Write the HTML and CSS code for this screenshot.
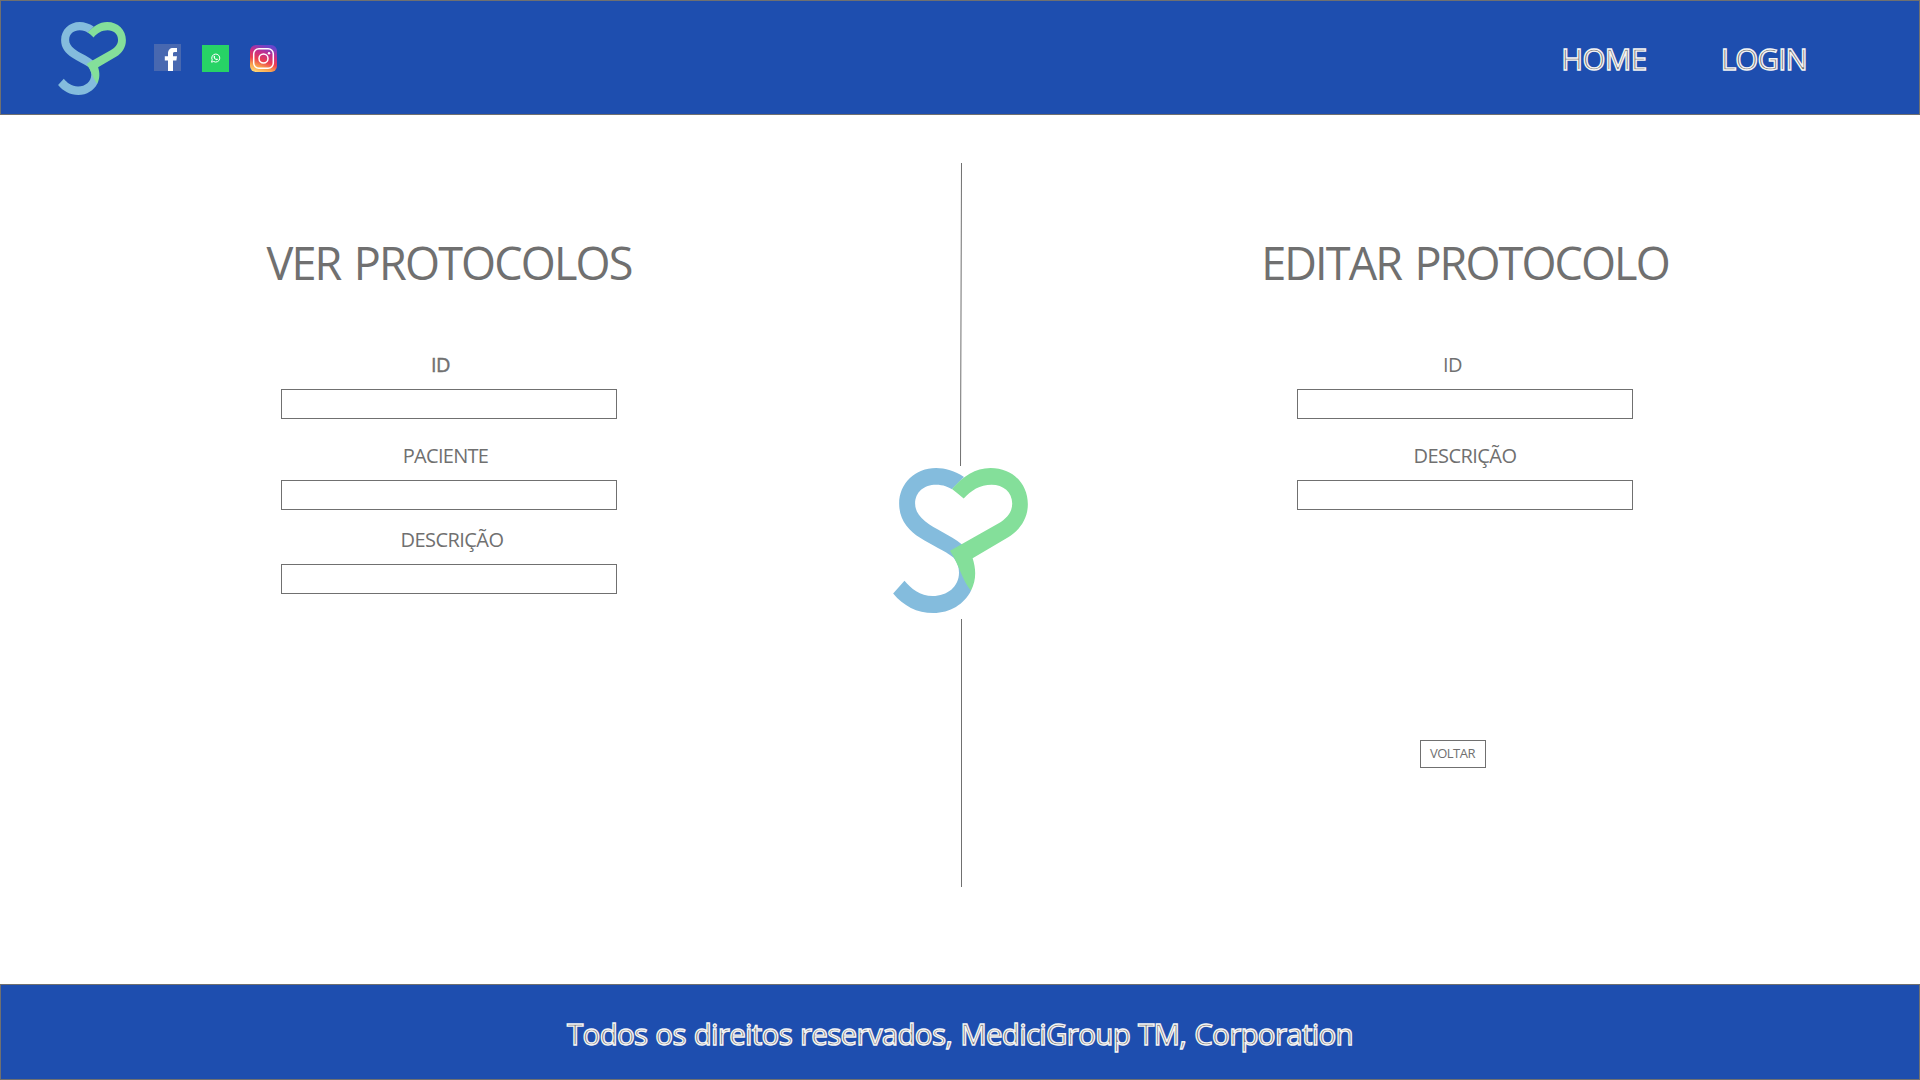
FILE: index.html
```html
<!DOCTYPE html>
<html lang="pt-BR">
<head>
<meta charset="utf-8">
<title>Protocolos</title>
<link rel="stylesheet" href="styles.css">
</head>
<body>
<svg width="0" height="0" class="defs" aria-hidden="true">
  <defs>
    <symbol id="logo" viewBox="69 83 405 436">
      <path fill="#84bcdd" d="M282 110C255 92 225 83 198 83C135 83 87 130 87 190C87 240 115 270 150 293C185 316 225 332 250 352C262 366 267 380 267 398C267 440 232 468 188 468C150 468 122 445 103 422L69 460C100 497 140 519 190 519C240 519 283 492 303 452L300 340L275 312C240 283 195 268 165 243C145 226 135 210 135 190C135 155 162 133 198 133C220 133 236 140 246 147Z"/>
      <path fill="#84df9a" d="M246 146C280 108 315 83 362 83C428 83 474 130 474 192C474 235 450 270 415 291L308 354C318 385 320 420 303 452C276 420 270 380 240 332L385 250C412 234 427 215 427 190C427 155 400 133 365 133C330 133 303 150 281 175C270 165 258 155 246 146Z"/>
    </symbol>
    <linearGradient id="ig" x1="0.2" y1="1" x2="0.55" y2="0">
      <stop offset="0" stop-color="#ffd776"/>
      <stop offset="0.22" stop-color="#f9a04c"/>
      <stop offset="0.45" stop-color="#ea3f50"/>
      <stop offset="0.72" stop-color="#c42d8c"/>
      <stop offset="1" stop-color="#6a45cb"/>
    </linearGradient>
  </defs>
</svg>

<header class="bar header">
  <svg class="logo-small"><use href="#logo"/></svg>
  <div class="social">
    <svg class="facebook" viewBox="0 0 27 27"><rect width="27" height="27" fill="#4868b0"/><path fill="#fff" d="M14 27V16.500H10.800V12.300H14V9.500C14 6 16 4 19 4H23V8H20.600C19.300 8 19 8.700 19 9.800V12.300H23L22.400 16.500H19V27Z"/></svg>
    <svg viewBox="0 0 27 27"><rect width="27" height="27" fill="#27d366"/><path fill="none" stroke="#fff" stroke-width="1" d="M9.500 17.200L10.200 14.900A4 4 0 1 1 11.700 16.500Z"/><path fill="#fff" d="M11.800 11L12.700 10.800L13.200 12L12.800 12.700Q13.300 13.700 14.300 14.100L14.900 13.500L16 14.100Q16 15.200 14.800 15.300Q12.200 14.900 11.600 12.200Z"/></svg>
    <svg viewBox="0 0 27 27"><rect width="27" height="27" rx="6" fill="url(#ig)"/><g fill="none" stroke="#fff" stroke-width="1.500"><rect x="3.700" y="3.700" width="19.600" height="19.600" rx="5.200"/><circle cx="13.500" cy="13.500" r="4.500"/></g><circle cx="19" cy="8.200" r="1.200" fill="#fff"/></svg>
  </div>
  <nav class="nav">
    <a class="outlined home">HOME</a>
    <a class="outlined login">LOGIN</a>
  </nav>
</header>

<main class="main">
  <section class="panel view">
    <h1 class="title">VER PROTOCOLOS</h1>
    <label class="field"><span class="label label-id strong">ID</span><input class="input"></label>
    <label class="field"><span class="label label-patient">PACIENTE</span><input class="input"></label>
    <label class="field tight"><span class="label label-description">DESCRIÇÃO</span><input class="input"></label>
  </section>
  <div class="divider">
    <svg class="line upper" viewBox="0 0 135 303"><path d="M68.500 0L67.500 303"/></svg>
    <svg class="logo-large"><use href="#logo"/></svg>
    <svg class="line lower" viewBox="0 0 135 268"><path d="M68.500 0V268"/></svg>
  </div>
  <section class="panel edit">
    <h1 class="title title-edit">EDITAR PROTOCOLO</h1>
    <label class="field"><span class="label label-edit-id">ID</span><input class="input"></label>
    <label class="field"><span class="label">DESCRIÇÃO</span><input class="input"></label>
    <button class="back">VOLTAR</button>
  </section>
</main>

<footer class="bar footer">
  <p class="outlined rights">Todos os direitos reservados, MediciGroup TM, Corporation</p>
</footer>
</body>
</html>
```
FILE: styles.css
```css
* { box-sizing: border-box; }
body {
  margin: 0;
  height: 1080px;
  display: flex;
  flex-direction: column;
  overflow: hidden;
  background: #fff;
  color: #707070;
  font-family: "Open Sans", "Noto Sans", sans-serif;
}
.defs { display: block; flex: none; height: 0; }
.bar { display: flex; background: #1e4eaf; border: 1px solid #707070; flex: none; }

.header { height: 115px; padding: 21px 112px 0 57px; }
.logo-small { width: 68px; height: 73px; }
.social { display: flex; gap: 21px; margin: 23px 0 0 28px; }
.social svg { width: 27px; height: 27px; }
.social .facebook { margin-top: -1px; }
.nav { display: flex; gap: 74px; margin: 17px 0 0 auto; }
.outlined {
  font-size: 29.500px;
  line-height: 40px;
  white-space: nowrap;
  color: #707070;
  -webkit-text-stroke: 1.400px #f4f4f4;
}
.home { letter-spacing: -0.500px; }
.login { letter-spacing: -0.800px; }

.main { flex: 1; display: grid; grid-template-columns: 893px 135px 1fr; }
.panel { display: flex; flex-direction: column; align-items: center; padding-top: 118px; }
.view { padding-left: 5px; }
.edit { padding-right: 18px; }
.title {
  margin: 0 0 58px;
  font-size: 45px;
  font-weight: 400;
  line-height: 60px;
  letter-spacing: -1.850px;
  word-spacing: 3.500px;
  white-space: nowrap;
}
.title-edit { letter-spacing: -1.900px; }
.field { display: flex; flex-direction: column; align-items: center; gap: 10px; }
.field + .field { margin-top: 23px; }
.field + .tight { margin-top: 16px; }
.label { font-size: 20px; line-height: 28px; letter-spacing: -0.550px; }
.strong { -webkit-text-stroke: 0.400px #707070; }
.label-id { margin-right: 17px; }
.label-patient { margin-right: 7px; letter-spacing: -0.700px; }
.label-description { margin-left: 6px; }
.label-edit-id { margin-right: 25px; }
.input {
  width: 336px;
  height: 30px;
  padding: 0 8px;
  border: 1px solid #707070;
  border-radius: 0;
  background: #fff;
  outline: none;
}
.back {
  width: 66px;
  height: 28px;
  margin: 230px 24px 0 0;
  padding: 0 1px 2px 0;
  border: 1px solid #707070;
  background: #fff;
  color: #707070;
  font: 13px/24px "Open Sans", "Noto Sans", sans-serif;
  letter-spacing: -0.500px;
}

.divider { display: flex; flex-direction: column; padding-top: 48px; }
.line { width: 135px; fill: none; stroke: #707070; stroke-width: 1; }
.upper { height: 303px; }
.lower { height: 268px; }
.logo-large { width: 135px; height: 145px; margin: 2px 0 6px; }

.footer { height: 96px; justify-content: center; padding-top: 29px; }
.rights { margin: 0; letter-spacing: -0.700px; word-spacing: 1px; }
```
